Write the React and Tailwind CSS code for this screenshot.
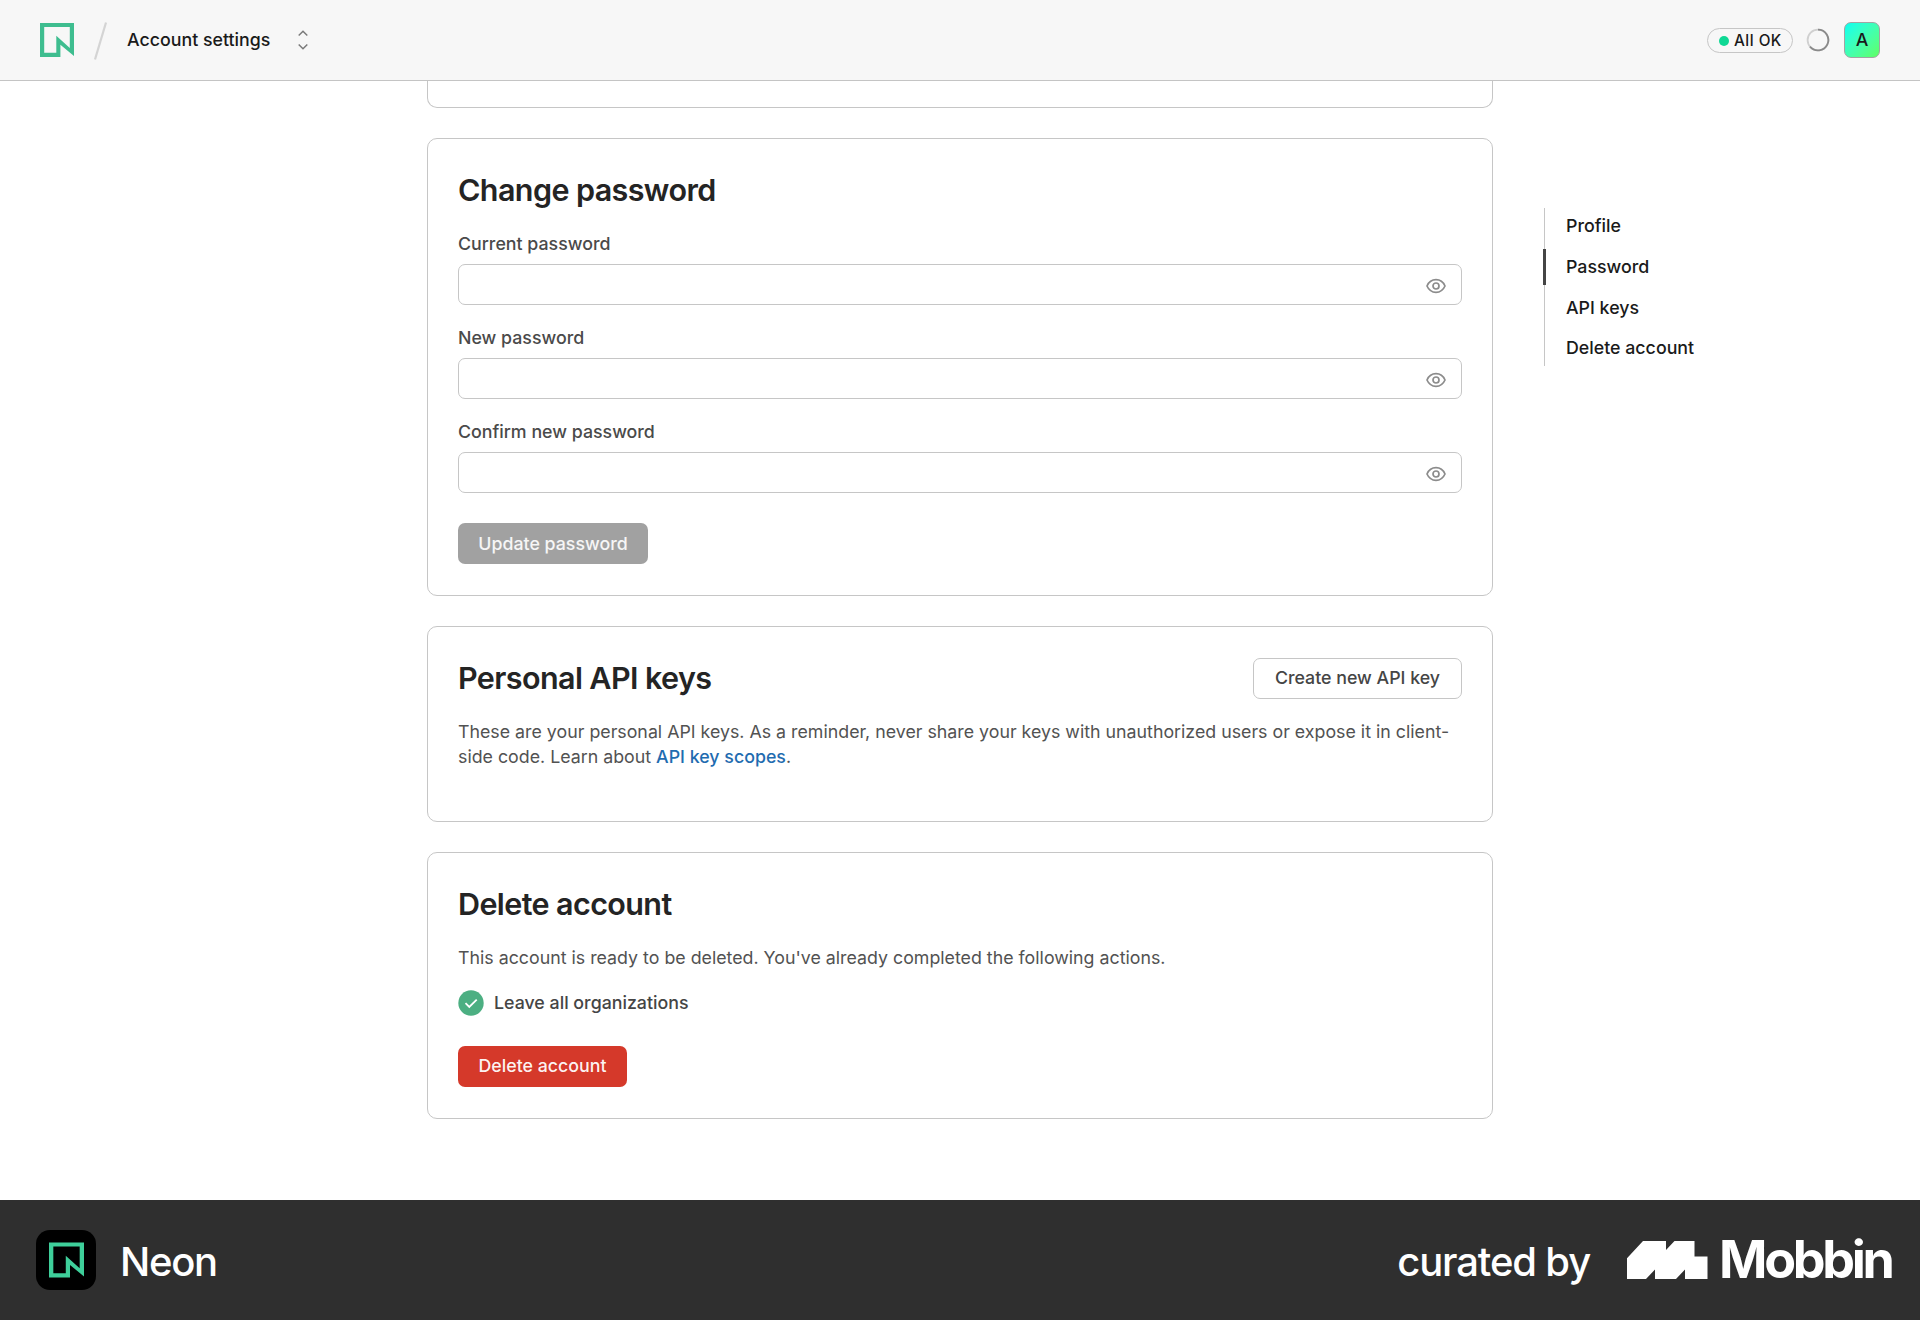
import { useState } from "react"

const sections = ["Profile", "Password", "API keys", "Delete account"]

function NeonMark({ className }) {
    return (
        <svg viewBox="0 0 34 34" className={className} fill="currentColor" fillRule="evenodd">
            <path d="M0 0H34V33L20.4 21.8V34H0ZM4.2 4V29.8H16.3V12.8L29.8 25V4Z" />
        </svg>
    )
}

function MobbinMark() {
    return (
        <svg viewBox="0 0 81 38" className="-mt-px h-[38px] w-[81px]" fill="white">
            <path d="M16 0H39V9L47.5 0H67.5V15.5H80.5V38H58V28.5L49 38H28V28.5L19 38H0V17.3Z" />
        </svg>
    )
}

function EyeIcon() {
    return (
        <svg viewBox="0 0 20 16" className="h-4 w-5" fill="none" stroke="#8c8c8c" strokeWidth="1.7">
            <path d="M1 8C2.8 3.9 6 1.7 10 1.7S17.2 3.9 19 8C17.2 12.1 14 14.3 10 14.3S2.8 12.1 1 8Z" />
            <circle cx="10" cy="8" r="3" />
        </svg>
    )
}

function Card({ className = "", children }) {
    return (
        <section className={`rounded-[10px] border border-[#c6c6c6] bg-white px-[30px] ${className}`}>
            {children}
        </section>
    )
}

function CardTitle({ children }) {
    return <h2 className="text-[30.5px] leading-10 font-semibold tracking-[-0.6px] text-[#242424]">{children}</h2>
}

function PasswordField({ label }) {
    const [value, setValue] = useState("")
    const [visible, setVisible] = useState(false)

    return (
        <label className="flex h-[94px] flex-col">
            <span className="h-[33px] pt-px leading-6 font-medium text-[#4a4a4a]">{label}</span>
            <span className="flex h-[41px] items-center rounded-[7px] border border-[#c6c6c6] pr-[15px] pl-4">
                <input
                    type={visible ? "text" : "password"}
                    value={value}
                    onChange={(e) => setValue(e.target.value)}
                    className="min-w-0 flex-1 outline-none"
                />
                <button type="button" aria-label="Toggle visibility" className="pt-0.5" onClick={() => setVisible(!visible)}>
                    <EyeIcon />
                </button>
            </span>
        </label>
    )
}

function Header() {
    return (
        <header className="flex h-[81px] shrink-0 items-center border-b border-[#c4c4c4] bg-[#f7f7f7] pr-10 pl-[40px]">
            <NeonMark className="h-[34px] w-[34px] text-[#3ebd8f]" />
            <svg viewBox="0 0 13 38" className="mt-0.5 ml-5 h-[38px] w-[13px]" stroke="#d4d4d4" strokeWidth="2.2">
                <path d="M12 0.5L1 37.5" />
            </svg>
            <span className="ml-5 pt-px font-medium text-[#1a1a1a]">Account settings</span>
            <svg viewBox="0 0 10 20" className="ml-[28px] h-5 w-[10px]" fill="none" stroke="#7a7a7a" strokeWidth="1.5">
                <path d="M0.7 5.5L5 1.3L9.3 5.5M0.7 14.5L5 18.7L9.3 14.5" />
            </svg>

            <div className="ml-auto flex items-center">
                <div className="mt-px flex h-[25px] w-[86px] items-center rounded-full border border-[#c6c6c6] pl-[11px] text-[15.3px] font-medium tracking-[0.5px] text-[#1a1a1a]">
                    <span className="mr-[5px] size-[10px] shrink-0 rounded-full bg-[#0fd894]" />
                    <span className="pt-px">All OK</span>
                </div>
                <svg viewBox="0 0 24 24" className="ml-[13px] size-6" fill="none" strokeWidth="1.8">
                    <circle cx="12" cy="12" r="10.4" stroke="#d0d0d0" />
                    <path d="M12 1.6A10.4 10.4 0 1 1 4 18.7" stroke="#8a8a8a" />
                </svg>
                <div className="ml-[14px] flex size-9 items-center justify-center rounded-[7px] border border-[#a3a3a3] bg-linear-to-br from-[#00fff0] to-[#60ff60] font-medium text-[#1a1a1a]">
                    A
                </div>
            </div>
        </header>
    )
}

function SideNav() {
    return (
        <nav className="mt-[127px] ml-[51px] flex h-[158px] w-[200px] flex-col border-l border-[#c6c6c6]">
            {sections.map((name) => (
                <a key={name} href="#" className="relative flex h-[40.7px] shrink-0 items-center pb-[3.5px] pl-[21px] font-medium text-[#1a1a1a]">
                    {name === "Password" && <span className="absolute top-0 -left-[2px] h-9 w-[2.5px] bg-[#454545]" />}
                    {name}
                </a>
            ))}
        </nav>
    )
}

function Footer() {
    return (
        <footer className="flex h-[120px] shrink-0 items-center bg-[#2f2f2f] pr-[28px] pl-9 text-white">
            <div className="flex size-[60px] items-center justify-center rounded-[14px] bg-black">
                <NeonMark className="h-9 w-[35px] text-[#3ecf9a]" />
            </div>
            <span className="ml-6 pt-[3px] text-[40px] leading-none font-medium tracking-[-1.3px]">Neon</span>
            <span className="ml-auto pt-[3px] text-[40px] leading-none font-medium tracking-[-1.15px]">curated by</span>
            <div className="ml-[37px] flex items-center">
                <MobbinMark />
                <div className="ml-[11px] w-[173px] text-[52px] leading-none font-bold tracking-[-3.3px]">Mobbin</div>
            </div>
        </footer>
    )
}

export default function App() {
    return (
        <div className="flex h-[1320px] w-[1920px] flex-col overflow-hidden bg-white font-[Inter,sans-serif] text-[17.8px]">
            <Header />
            <main className="flex flex-1 pl-[427px]">
                <div className="flex w-[1066px] shrink-0 flex-col">
                    <div className="h-[27px] rounded-b-[10px] border border-t-0 border-[#c6c6c6]" />

                    <Card className="mt-[30px] h-[458px] pt-[31px]">
                        <CardTitle>Change password</CardTitle>
                        <div className="mt-[21px]">
                            <PasswordField label="Current password" />
                            <PasswordField label="New password" />
                            <PasswordField label="Confirm new password" />
                        </div>
                        <button className="mt-[10px] h-[41px] w-[190px] rounded-[7px] bg-[#a1a1a1] pt-px font-medium text-white/90">
                            Update password
                        </button>
                    </Card>

                    <Card className="mt-[30px] h-[196px] pt-[31px]">
                        <div className="flex h-[41px] items-start justify-between">
                            <CardTitle>Personal API keys</CardTitle>
                            <button className="h-[41px] w-[209px] rounded-[7px] border border-[#c6c6c6] font-medium text-[#454545]">
                                Create new API key
                            </button>
                        </div>
                        <p className="mt-5 leading-[25.4px] text-[#525252]">
                            These are your personal API keys. As a reminder, never share your keys with unauthorized users or expose it in client-side code. Learn about{" "}
                            <a href="#" className="font-medium text-[#1f6cb0]">API key scopes</a>.
                        </p>
                    </Card>

                    <Card className="mt-[30px] h-[267px] pt-[31px]">
                        <CardTitle>Delete account</CardTitle>
                        <p className="mt-[21px] leading-[25.5px] text-[#525252]">
                            This account is ready to be deleted. You've already completed the following actions.
                        </p>
                        <div className="mt-[19px] flex h-[26px] items-center gap-[10px] font-medium text-[#454545]">
                            <svg viewBox="0 0 26 26" className="size-[26px]" fill="none">
                                <circle cx="13" cy="13" r="12.7" fill="#4caf82" />
                                <path d="M7.5 13.2L11.3 17L18.7 9.7" stroke="white" strokeWidth="1.8" />
                            </svg>
                            <span className="pt-px">Leave all organizations</span>
                        </div>
                        <button className="mt-[30px] h-[41px] w-[169px] rounded-[7px] bg-[#d5392a] pt-px font-medium text-white/95">
                            Delete account
                        </button>
                    </Card>
                </div>
                <SideNav />
            </main>
            <Footer />
        </div>
    )
}
